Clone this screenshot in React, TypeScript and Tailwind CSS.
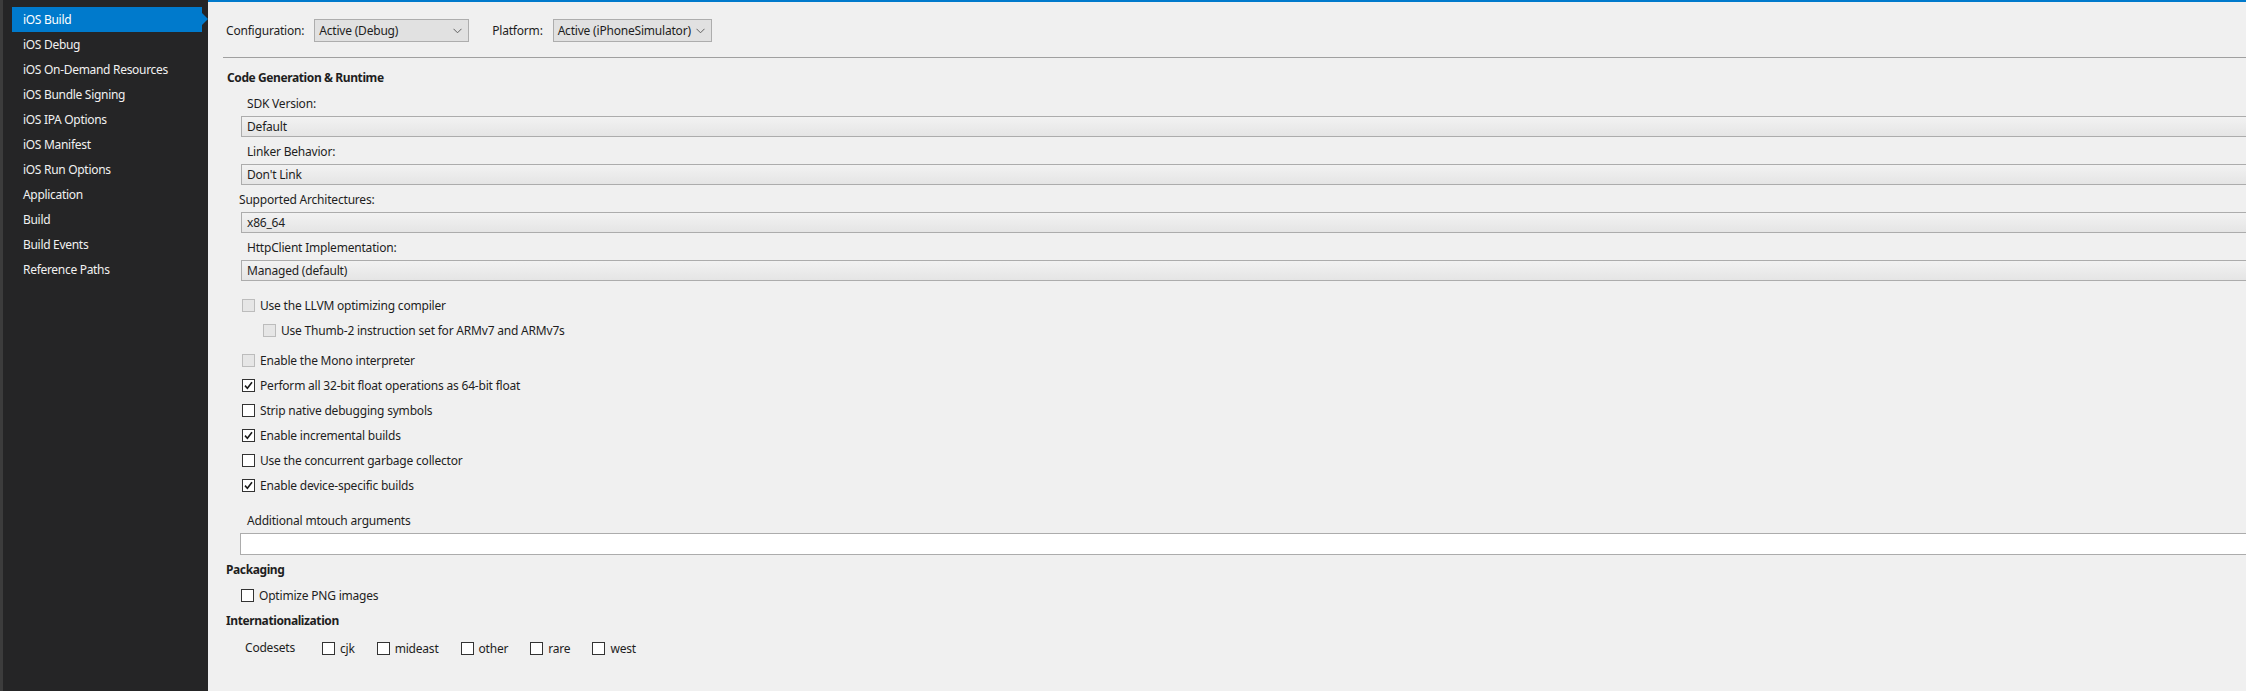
import React from "react";

const navItems = [
  "iOS Build",
  "iOS Debug",
  "iOS On-Demand Resources",
  "iOS Bundle Signing",
  "iOS IPA Options",
  "iOS Manifest",
  "iOS Run Options",
  "Application",
  "Build",
  "Build Events",
  "Reference Paths",
];

function Check({ checked, disabled }: { checked?: boolean; disabled?: boolean }) {
  return (
    <span
      className={
        "flex h-[13px] w-[13px] shrink-0 items-center justify-center border " +
        (disabled ? "border-[#bcbcbc] bg-[#e6e6e6]" : "border-[#333333] bg-white")
      }
    >
      {checked && (
        <svg width="9" height="9" viewBox="0 0 9 9">
          <path d="M1 4.6 L3.4 7.2 L8 1.2" fill="none" stroke="#1a1a1a" strokeWidth="1.6" />
        </svg>
      )}
    </span>
  );
}

function CheckRow({
  label,
  checked,
  disabled,
  className = "",
}: {
  label: string;
  checked?: boolean;
  disabled?: boolean;
  className?: string;
}) {
  return (
    <div className={"flex h-[17px] items-center gap-[5px] whitespace-nowrap " + className}>
      <Check checked={checked} disabled={disabled} />
      <span className="leading-none">{label}</span>
    </div>
  );
}

function Dropdown({ value, width }: { value: string; width: string }) {
  return (
    <div
      className={
        "flex h-[23px] shrink-0 items-center justify-between whitespace-nowrap border border-[#adadad] bg-[#e1e1e1] pl-[4px] pr-[6px] " +
        width
      }
    >
      <span>{value}</span>
      <svg width="9" height="6" viewBox="0 0 9 6" className="shrink-0">
        <path d="M0.5 0.8 L4.5 4.8 L8.5 0.8" fill="none" stroke="#606060" strokeWidth="1" />
      </svg>
    </div>
  );
}

function Field({ value }: { value: string }) {
  return (
    <div className="mt-[4px] ml-[33px] flex h-[21px] items-center border border-r-0 border-[#acacac] bg-gradient-to-b from-[#f2f2f2] to-[#e5e5e5] pl-[5px]">
      {value}
    </div>
  );
}

export default function App() {
  return (
    <div
      className="flex h-[691px] w-[2246px] overflow-hidden text-[12px] tracking-[-0.2px] text-[#1e1e1e]"
      style={{ fontFamily: '"Noto Sans", "Open Sans", sans-serif' }}
    >
      {/* Sidebar */}
      <div className="w-[208px] shrink-0 border-l-[3px] border-[#3c3c3c] bg-[#252526] pt-[7px] tracking-[-0.3px]">
        {navItems.map((item, i) => (
          <div
            key={item}
            className={
              "relative ml-[9px] flex h-[25px] w-[190px] items-center pl-[11px] text-[#f1f1f1] " +
              (i === 0 ? "bg-[#007acc] text-white" : "")
            }
          >
            {item}
            {i === 0 && (
              <span className="absolute right-[-6px] top-[6px] h-0 w-0 border-y-[6px] border-l-[6px] border-y-transparent border-l-[#007acc]" />
            )}
          </div>
        ))}
      </div>

      {/* Main */}
      <div className="flex-1 border-t-2 border-[#007acc] bg-[#f0f0f0]">
        <div className="flex flex-col pt-[17px]">
          <div className="flex items-center pl-[18px]">
            <span className="mr-[10px]">Configuration:</span>
            <Dropdown value="Active (Debug)" width="w-[155px]" />
            <span className="ml-[23px] mr-[10px]">Platform:</span>
            <Dropdown value="Active (iPhoneSimulator)" width="w-[159px]" />
          </div>

          <div className="ml-[15px] mt-[15px] h-px bg-[#a0a0a0]" />

          <div className="ml-[19px] mt-[12px] h-[16px] font-bold leading-[16px] tracking-[-0.4px]">
            Code Generation &amp; Runtime
          </div>

          <div className="ml-[39px] mt-[10px] h-[16px] leading-[16px]">SDK Version:</div>
          <Field value="Default" />

          <div className="ml-[39px] mt-[7px] h-[16px] leading-[16px]">Linker Behavior:</div>
          <Field value="Don't Link" />

          <div className="ml-[31px] mt-[7px] h-[16px] leading-[16px]">Supported Architectures:</div>
          <Field value="x86_64" />

          <div className="ml-[39px] mt-[7px] h-[16px] leading-[16px]">HttpClient Implementation:</div>
          <Field value="Managed (default)" />

          <div className="ml-[34px] flex flex-col">
            <CheckRow className="mt-[16px]" label="Use the LLVM optimizing compiler" disabled />
            <CheckRow className="ml-[21px] mt-[8px]" label="Use Thumb-2 instruction set for ARMv7 and ARMv7s" disabled />
            <CheckRow className="mt-[13px]" label="Enable the Mono interpreter" disabled />
            <CheckRow className="mt-[8px]" label="Perform all 32-bit float operations as 64-bit float" checked />
            <CheckRow className="mt-[8px]" label="Strip native debugging symbols" />
            <CheckRow className="mt-[8px]" label="Enable incremental builds" checked />
            <CheckRow className="mt-[8px]" label="Use the concurrent garbage collector" />
            <CheckRow className="mt-[8px]" label="Enable device-specific builds" checked />
          </div>

          <div className="ml-[39px] mt-[19px] h-[16px] leading-[16px]">Additional mtouch arguments</div>
          <div className="ml-[32px] mt-[4px] h-[22px] border border-r-0 border-[#acacac] bg-white" />

          <div className="ml-[18px] mt-[7px] h-[16px] font-bold leading-[16px] tracking-[-0.4px]">Packaging</div>
          <CheckRow className="ml-[33px] mt-[9px]" label="Optimize PNG images" />

          <div className="ml-[18px] mt-[9px] h-[16px] font-bold leading-[16px] tracking-[-0.4px]">
            Internationalization
          </div>
          <div className="ml-[37px] mt-[11px] flex h-[17px] items-center">
            <span className="mr-[27px] -translate-y-[1px]">Codesets</span>
            <CheckRow className="mr-[22px]" label="cjk" />
            <CheckRow className="mr-[22px]" label="mideast" />
            <CheckRow className="mr-[22px]" label="other" />
            <CheckRow className="mr-[22px]" label="rare" />
            <CheckRow label="west" />
          </div>
        </div>
      </div>
    </div>
  );
}
